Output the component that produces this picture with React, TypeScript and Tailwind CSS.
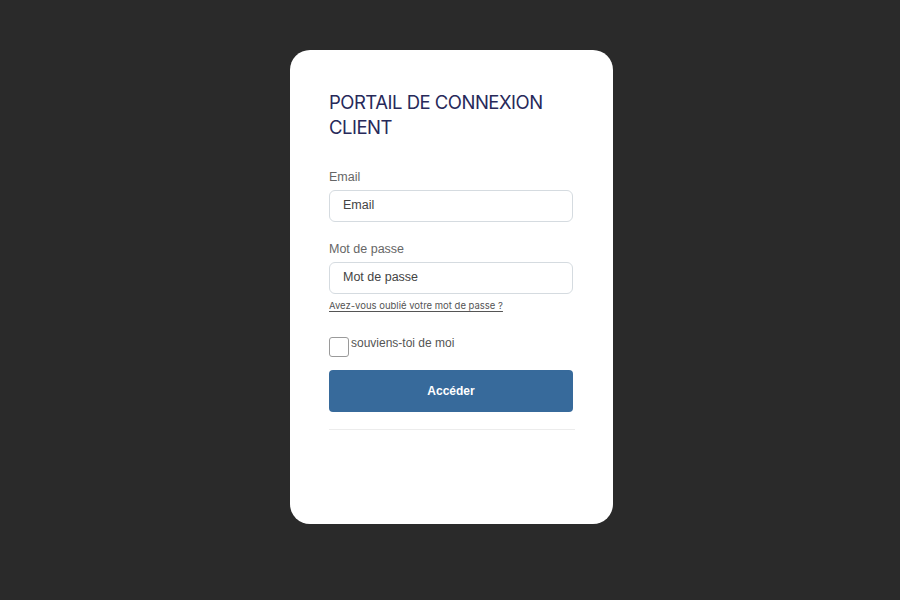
export default function App() {
  return (
    <div className="flex min-h-[600px] justify-center bg-[#2a2a2a] pl-[3px] pt-[50px]">
      <div className="h-[474px] w-[323px] rounded-[20px] bg-white px-[39px] pt-[40px]">
        {/* Title */}
        <h1 className="font-['Inter',sans-serif] text-[18.5px] leading-[25px] tracking-[-0.5px] text-[#27295a]">
          PORTAIL DE CONNEXION
          <br />
          CLIENT
        </h1>

        <form className="mt-[29px] w-[244px] font-['Liberation_Sans',Arial,sans-serif]">
          <label className="block text-[12.5px] leading-[16px] text-[#666]">Email</label>
          <input
            type="text"
            placeholder="Email"
            className="mt-[5px] block h-[32px] w-full rounded-[6px] border border-[#d5dbe0] px-[13px] pb-[3px] text-[12.5px] text-[#333] placeholder:text-[#444] outline-none"
          />

          <label className="mt-[19px] block text-[12.5px] leading-[16px] text-[#666]">
            Mot de passe
          </label>
          <input
            type="password"
            placeholder="Mot de passe"
            className="mt-[5px] block h-[32px] w-full rounded-[6px] border border-[#d5dbe0] px-[13px] pb-[3px] text-[12.5px] text-[#333] placeholder:text-[#444] outline-none"
          />
          <a
            href="#"
            className="mt-[5px] block font-['Inter',sans-serif] text-[9.5px] leading-[14px] text-[#555] underline underline-offset-2"
          >
            Avez-vous oublié votre mot de passe ?
          </a>

          {/* Remember me */}
          <div className="mt-[24px] flex items-start">
            <span className="h-[20px] w-[20px] rounded-[3px] border border-[#9a9a9a] bg-white" />
            <span className="ml-[2px] text-[12px] leading-[12px] text-[#555]">
              souviens-toi de moi
            </span>
          </div>

          <button
            type="button"
            className="mt-[13px] flex h-[42px] w-full items-center justify-center rounded-[4px] bg-[#376a9b] text-[12px] font-bold text-white"
          >
            Accéder
          </button>
        </form>

        <div className="mt-[17px] h-px w-[246px] bg-[#ececec]" />
      </div>
    </div>
  );
}
